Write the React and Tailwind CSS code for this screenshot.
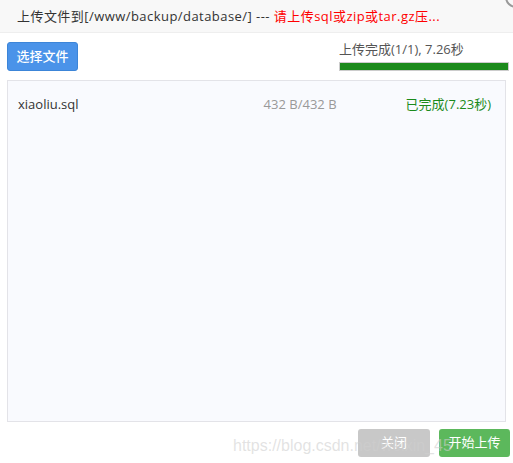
import React from 'react';

const App = () => {
  return (
    <div
      className="relative w-[513px] h-[463px] bg-white overflow-hidden text-[13px] text-[#333]"
      style={{ fontFamily: '"Open Sans", "Noto Sans CJK SC", sans-serif' }}
    >
      {/* header */}
      <div className="h-[33px] bg-[#f8f8f8] border-b border-[#eee] flex items-center pl-[17px] relative">
        <div className="whitespace-nowrap leading-[20px] tracking-[0.45px]">
          上传文件到[/www/backup/database/] --- <span className="text-[#ff0000]">请上传sql或zip或tar.gz压...</span>
        </div>
        <div className="absolute right-[-14px] top-[-14px] w-[22px] h-[22px] rounded-full border-2 border-[#999]" />
      </div>

      {/* toolbar */}
      <div className="flex justify-between items-start px-[7px] pt-[7px]">
        <button className="mt-[2px] w-[71px] h-[29px] rounded-[3px] bg-[#4a93e9] border border-[#3c85d8] text-white text-[13px] font-medium">
          选择文件
        </button>
        <div className="w-[170px] -mr-[3px]">
          <div className="leading-[18px] text-[#555]">上传完成(1/1), 7.26秒</div>
          <div className="mt-[4px] h-[9px] border border-[#ccc] bg-white">
            <div className="h-full bg-[#1b8a1b]" style={{ width: '100%' }} />
          </div>
        </div>
      </div>

      {/* file list */}
      <div className="mx-[7px] mt-[9px] h-[342px] border border-[#e3e3e8] bg-[#f9fafe]">
        <div className="flex items-center h-[46px] pt-[1px] pl-[10px] pr-[14px]">
          <span className="flex-1">xiaoliu.sql</span>
          <span className="w-[142px] text-[#999]">432 B/432 B</span>
          <span className="text-[#1b8a1b]">已完成(7.23秒)</span>
        </div>
      </div>

      {/* footer */}
      <div className="flex justify-end gap-[9px] pr-[3px] pt-[7px]">
        <button className="w-[72px] h-[28px] rounded-[3px] bg-[#c8c8c8] text-white text-[13px]">关闭</button>
        <button className="w-[71px] h-[28px] rounded-[3px] bg-[#5cb85c] text-white text-[13px]">开始上传</button>
      </div>

      {/* watermark */}
      <div
        className="absolute left-[233px] top-[434px] text-[16px] text-[#cfcfcf]/60 pointer-events-none whitespace-nowrap"
        style={{ fontFamily: '"Liberation Sans", sans-serif' }}
      >
        https://blog.csdn.net/weixin_45
      </div>
    </div>
  );
};

export default App;
